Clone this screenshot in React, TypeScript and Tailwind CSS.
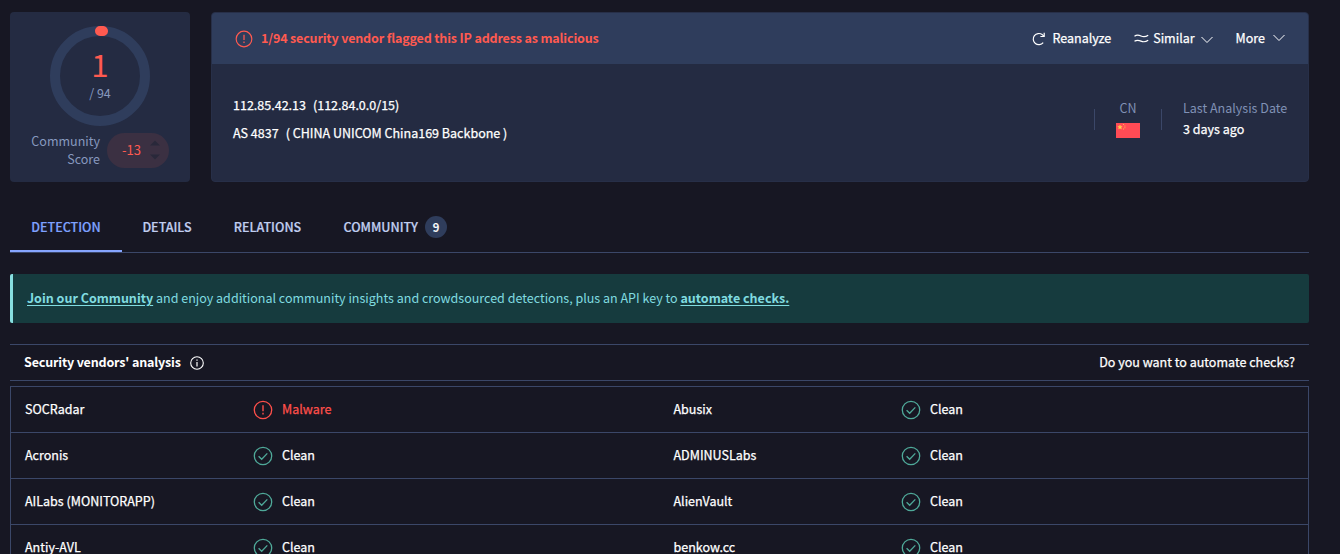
import React from "react";

type Verdict = "Malware" | "Clean";

const rows: [string, Verdict, string, Verdict][] = [
  ["SOCRadar", "Malware", "Abusix", "Clean"],
  ["Acronis", "Clean", "ADMINUSLabs", "Clean"],
  ["AILabs (MONITORAPP)", "Clean", "AlienVault", "Clean"],
  ["Antiy-AVL", "Clean", "benkow.cc", "Clean"],
];

function AlertIcon({ className }: { className: string }) {
  return (
    <svg viewBox="0 0 20 20" className={className} fill="none" stroke="currentColor">
      <circle cx="10" cy="10" r="8.7" strokeWidth="1.3" />
      <path d="M10 5.2v6" strokeWidth="1.4" />
      <path d="M10 12.8v1.6" strokeWidth="1.4" />
    </svg>
  );
}

function CheckIcon() {
  return (
    <svg viewBox="0 0 20 20" className="size-5 text-[#4fa999]" fill="none" stroke="currentColor" strokeWidth="1.3">
      <circle cx="10" cy="10" r="8.7" />
      <path d="M5.6 10.2l3.1 3.1 5.6-5.900" />
    </svg>
  );
}

function Chevron() {
  return (
    <svg viewBox="0 0 12 8" className="h-2 w-3" fill="none" stroke="currentColor" strokeWidth="1">
      <path d="M.5 1l5.5 5.5L11.5 1" />
    </svg>
  );
}

function Result({ verdict }: { verdict: Verdict }) {
  return verdict === "Malware" ? (
    <div className="flex items-center gap-[9px] text-[#ff4f4a]">
      <AlertIcon className="size-5" />
      <span className="pb-px">Malware</span>
    </div>
  ) : (
    <div className="flex items-center gap-[9px]">
      <CheckIcon />
      <span className="pb-px">Clean</span>
    </div>
  );
}

function ScoreCard() {
  return (
    <section className="flex h-[170px] w-[180px] shrink-0 flex-col items-center rounded bg-[#242b42] pt-[14px]">
      <div className="grid size-[100px] place-items-center">
        <svg viewBox="0 0 100 100" className="col-start-1 row-start-1 size-[100px]" fill="none">
          <circle cx="50" cy="50" r="45" stroke="#2f3d5c" strokeWidth="10" />
          <path d="M50 5a45 45 0 0 1 3 .1" stroke="#ff5a50" strokeWidth="10" strokeLinecap="round" />
        </svg>
        <div className="col-start-1 row-start-1 flex flex-col items-center pb-[5px]">
          <span className="text-[31.3px] leading-[38px] text-[#ff5a50]">1</span>
          <span className="text-[12.5px] leading-[19px] text-[#8799bf]">/ 94</span>
        </div>
      </div>
      <div className="mt-[6px] flex w-full items-center gap-[7px] pl-[20px]">
        <div className="w-[70px] pb-[2px] text-right leading-[18px] text-[#8799bf]">
          Community Score
        </div>
        <div className="mb-[2px] flex h-[35px] w-[62px] items-center rounded-full bg-[#3b3042] pl-[15px] text-[13px] text-[#ff5a50]">
          <span className="w-[28px]">-13</span>
          <svg viewBox="0 0 10 20" className="h-5 w-[10px] fill-[#29283a]">
            <path d="M0 5.5L5 .5l5 5z" />
            <path d="M0 14.5h10L5 19.5z" />
          </svg>
        </div>
      </div>
    </section>
  );
}

function SummaryCard() {
  return (
    <section className="flex h-[170px] w-[1098px] flex-col overflow-hidden rounded border border-[#272f48] bg-[#242b42]">
      <header className="flex h-[51px] shrink-0 items-center bg-[#2f3d5c] pr-[23px] pl-[22px]">
        <AlertIcon className="ml-[0.5px] size-[18px] text-[#ff5a50]" />
        <h1 className="ml-[8.5px] pb-px font-bold tracking-[-0.16px] text-[#ff5a50]">
          1/94 security vendor flagged this IP address as malicious
        </h1>
        <div className="ml-auto flex items-center pb-px [-webkit-text-stroke:0.25px]">
          <svg viewBox="0 0 14 14" className="mt-[2px] size-[14px]" fill="none" stroke="currentColor" strokeWidth="1.2">
            <path d="M11.2 10.6A5.6 5.6 0 1 1 10.2 2.6L12 4.2" />
            <path d="M12.2.8v3.7H8.4" />
          </svg>
          <span className="ml-[6px]">Reanalyze</span>
          <svg viewBox="0 0 15 9" className="mt-px ml-[23px] h-[9px] w-[15px]" fill="none" stroke="currentColor" strokeWidth="1.2">
            <path d="M.5 2.2C3 .4 4.8 1 7 2s4.5 1 7.2-.8" />
            <path d="M.5 7.3C3 5.5 4.8 6.1 7 7.1s4.5 1 7.2-.8" />
          </svg>
          <span className="mr-[6px] ml-[4px]">Similar</span>
          <div className="mt-[4px]"><Chevron /></div>
          <span className="mr-[8px] ml-[23px]">More</span>
          <Chevron />
        </div>
      </header>
      <div className="flex flex-1 justify-between pr-[21px] pl-[21px]">
        <div className="flex flex-col gap-2 pt-[31px] [-webkit-text-stroke:0.25px]">
          <div className="flex gap-[7px]"><span>112.85.42.13</span><span>(112.84.0.0/15)</span></div>
          <div className="flex gap-[7px]"><span>AS 4837</span><span>( CHINA UNICOM China169 Backbone )</span></div>
        </div>
        <div className="flex pt-[34px]">
          <div className="mt-[11px] h-[21px] w-px bg-[#3b4768]" />
          <div className="flex w-[66px] flex-col items-center">
            <span className="text-[#8091b5]">CN</span>
            <svg viewBox="0 0 24 15" className="mt-[5px] h-[15px] w-6">
              <path d="M0 0h24v15H0z" fill="#ff4b55" />
              <path d="M4 2l.6 1.5h1.6l-1.3 1 .5 1.5L4 5.1 2.6 6l.5-1.500-1.300-1h1.600z" fill="#ffd84d" stroke="#ffc84d" strokeWidth=".5" />
              <path d="M7 1h1v1H7zM8.400 2.500h1v1h-1zM8.400 4.300h1v1h-1zM7 5.500h1v1H7z" fill="#ffb050" />
            </svg>
          </div>
          <div className="mt-[11px] h-[21px] w-px bg-[#3b4768]" />
          <div className="ml-[21px] flex w-[104px] flex-col whitespace-nowrap">
            <span className="text-[#8091b5]">Last Analysis Date</span>
            <span className="mt-px [-webkit-text-stroke:0.25px]">3 days ago</span>
          </div>
        </div>
      </div>
    </section>
  );
}

export default function App() {
  return (
    <div className="h-[554px] w-full overflow-hidden bg-[#171723] pt-3 pl-[10px] font-['Noto_Sans_CJK_SC',sans-serif] text-[12.53px] leading-5 text-white">
      <main className="w-[1299px]">
        <div className="flex gap-[21px]">
          <ScoreCard />
          <SummaryCard />
        </div>
        <nav className="mt-[20px] flex h-[51px] border-b border-[#3b4768] font-medium text-[#c0cef0] [-webkit-text-stroke:0.2px]">
          <div className="flex w-[112px] items-center justify-center border-b-2 border-[#86a5ff] pt-[2px] text-[#7ea1ff]">DETECTION</div>
          <div className="flex w-[90px] items-center justify-center">DETAILS</div>
          <div className="flex w-[111px] items-center justify-center">RELATIONS</div>
          <div className="flex items-center gap-[7px] pl-[20.5px]">
            <span>COMMUNITY</span>
            <span className="flex size-[22px] items-center justify-center rounded-full bg-[#2f3d5c] text-[11.5px] text-white">9</span>
          </div>
        </nav>
        <p className="mt-[21px] h-[49px] rounded-xs border-l-3 border-[#87dfe0] bg-[#163b3e] pl-[14px] leading-[48px] text-[#80dce0]">
          <a className="font-bold underline underline-offset-2">Join our Community</a> and enjoy additional community insights and crowdsourced detections, plus an API key to <a className="font-bold underline underline-offset-2">automate checks.</a>
        </p>
        <div className="mt-[21px] flex h-[37px] items-center border-y border-[#3b4768] px-[14px]">
          <h2 className="pb-[2px] font-bold tracking-[-0.17px]">Security vendors' analysis</h2>
          <svg viewBox="0 0 14 14" className="ml-[9px] size-[14px]" fill="none" stroke="currentColor">
            <circle cx="7" cy="7" r="6.3" strokeWidth="1.1" />
            <path d="M7 3.5v1.3M7 6v4.5" strokeWidth="1.2" />
          </svg>
          <span className="ml-auto pb-[2px] [-webkit-text-stroke:0.25px]">Do you want to automate checks?</span>
        </div>
        <div className="mt-[5px] border border-[#3b4768] [-webkit-text-stroke:0.25px]">
          {rows.map(([a, av, b, bv]) => (
            <div key={a} className="grid h-[46px] grid-cols-[228px_420.5px_227.5px_1fr] items-center border-b border-[#3b4768] pl-[14px]">
              <span className="pb-px">{a}</span>
              <Result verdict={av} />
              <span className="pb-px">{b}</span>
              <Result verdict={bv} />
            </div>
          ))}
        </div>
      </main>
    </div>
  );
}
